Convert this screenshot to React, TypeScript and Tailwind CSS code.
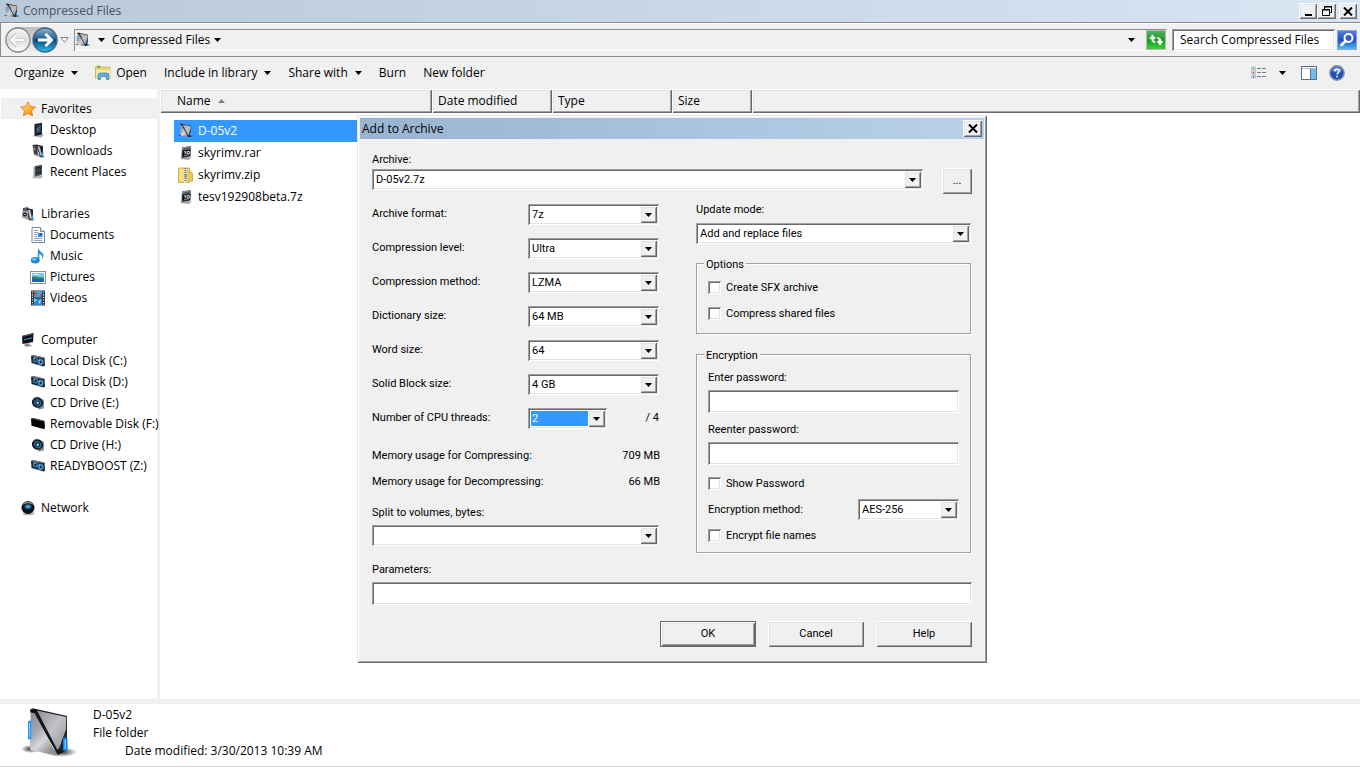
import { useState } from "react";
import type { ReactNode } from "react";

// Classic Windows bevels
const SUNKEN =
  "bg-white shadow-[inset_1px_1px_#a0a0a0,inset_-1px_-1px_#ffffff,inset_2px_2px_#696969,inset_-2px_-2px_#e3e3e3]";
const RAISED =
  "bg-[#f0f0f0] shadow-[inset_1px_1px_#ffffff,inset_-1px_-1px_#696969,inset_2px_2px_#e3e3e3,inset_-2px_-2px_#a0a0a0]";

/* ---------- icons ---------- */

function FolderIcon({ className = "size-4" }: { className?: string }) {
  return (
    <svg viewBox="0 0 56 56" className={`shrink-0 ${className}`} aria-hidden="true">
      <defs>
        <linearGradient id="folderFront" x1="0" y1="0" x2="0.6" y2="1">
          <stop offset="0" stopColor="#85878d" />
          <stop offset="0.45" stopColor="#a9aab1" />
          <stop offset="0.7" stopColor="#d6d7dc" />
          <stop offset="1" stopColor="#8f9096" />
        </linearGradient>
        <linearGradient id="folderBack" x1="0" y1="0" x2="1" y2="1">
          <stop offset="0" stopColor="#8c8e94" />
          <stop offset="0.5" stopColor="#c2c3c9" />
          <stop offset="0.8" stopColor="#a4a5ab" />
          <stop offset="1" stopColor="#5f6166" />
        </linearGradient>
        <radialGradient id="folderShade">
          <stop offset="0" stopColor="#000" stopOpacity="0.85" />
          <stop offset="1" stopColor="#000" stopOpacity="0" />
        </radialGradient>
      </defs>
      <ellipse cx="39" cy="46" rx="16" ry="5" fill="url(#folderShade)" />
      <ellipse cx="9" cy="43" rx="10" ry="4" fill="url(#folderShade)" />
      <path d="M9 3 L14 3 L45 10 L45 44 L36 49 Z" fill="#17181a" />
      <path d="M15 4.500 L44.300 11 L44 26 L38 41 L35.500 44 Z" fill="url(#folderBack)" />
      <path d="M45 21 L40 34 L37 44 L45 44 Z" fill="#26282b" />
      <path d="M8.700 5 L12.500 7 L35.300 49.700 L8 44 Z" fill="url(#folderFront)" />
      <path d="M8 4 Q9 2 12 2.500 Q14.500 3 14 6 L12 7 L8.500 6.500 Z" fill="#0c0d0e" />
      <rect x="6" y="14.500" width="3.200" height="19" rx="1.600" fill="#1996fb" />
      <rect x="7" y="17" width="1.100" height="14" fill="#7fd0ff" />
      <rect x="41" y="31.500" width="4.500" height="13.500" rx="1.600" fill="#0a7ff0" />
      <rect x="42.500" y="33.500" width="1.500" height="9.500" fill="#6fd0ff" />
    </svg>
  );
}

function StarIcon() {
  return (
    <svg viewBox="0 0 16 16" className="size-4 shrink-0" aria-hidden="true">
      <defs>
        <linearGradient id="star" x1="0" y1="0" x2="0.6" y2="1">
          <stop offset="0" stopColor="#fff3a8" />
          <stop offset="0.6" stopColor="#fbb83a" />
          <stop offset="1" stopColor="#f08a1c" />
        </linearGradient>
      </defs>
      <path
        d="M8 .8 L10.200 5.500 L15.400 6.100 L11.500 9.600 L12.600 14.900 L8 12.200 L3.400 14.900 L4.500 9.600 L.6 6.100 L5.800 5.500 Z"
        fill="url(#star)"
        stroke="#dd7f1f"
        strokeWidth="0.9"
        strokeLinejoin="round"
      />
    </svg>
  );
}

function PanelIcon() {
  return (
    <svg viewBox="0 0 16 16" className="size-4 shrink-0" aria-hidden="true">
      <path d="M2 14 L11 15.500 L14 13 L11 12 Z" fill="#a9adb3" />
      <path d="M5 2 L12 .8 L12 12.500 L5 14 Z" fill="#1b222b" />
      <path d="M4 2.500 L5 2 L5 14 L4 13.500 Z" fill="#7f868f" />
      <path d="M6.500 3.500 L11 2.800 L11 10 L6.500 11 Z" fill="#2c435a" />
      <path d="M7.500 9 L10 4.500 M7 6 L9 9.500" stroke="#5d86aa" strokeWidth="0.8" />
    </svg>
  );
}

function RecentIcon() {
  return (
    <svg viewBox="0 0 16 16" className="size-4 shrink-0" aria-hidden="true">
      <path d="M2 14 L11 14.500 L13 12 L6 11 Z" fill="#b3b6ba" />
      <path d="M5 2 L12 .8 L12 11 L5 12.500 Z" fill="#4b5158" />
      <path d="M3.500 3 L5 2 L5 12.500 L3.500 14 Z" fill="#9a9ea4" />
      <path d="M6.500 3.500 L11 2.800 L11 9 L6.500 10 Z" fill="#15191e" />
      <circle cx="8.700" cy="6.300" r="1.500" fill="none" stroke="#7d8893" strokeWidth="0.7" />
    </svg>
  );
}

function DownloadsIcon() {
  return (
    <svg viewBox="0 0 16 16" className="size-4 shrink-0" aria-hidden="true">
      <path d="M3 12 L13 15 L15 13 L6 11 Z" fill="#9fa3a8" />
      <path d="M2.500 2 L7 1.500 L8 12 L4 11 Z" fill="#3b3f45" />
      <path d="M6 1.500 L13 3 L13 13.500 L10 14 Z" fill="#24272b" />
      <path d="M7.500 3 L9.500 3.500 L12 12 L10.500 13 Z" fill="#bfc2c7" />
      <path d="M4 3 L5.500 6 L3.500 8 Z" fill="#9aa0a8" />
      <rect x="11.500" y="9.500" width="1.800" height="3.500" fill="#2a9cf0" />
    </svg>
  );
}

function LibrariesIcon() {
  return (
    <svg viewBox="0 0 16 16" className="size-4 shrink-0" aria-hidden="true">
      <path d="M3 12 L12 15.500 L15 13 L6 11 Z" fill="#a5a8ac" />
      <path d="M3 2 L8 1 L9 12 L3 11 Z" fill="#55595f" />
      <path d="M7 2 L13 3.500 L13 13 L9 14 Z" fill="#2a2d31" />
      <path d="M8 4 L10 4 L12 12 L10 13 Z" fill="#c9ccd0" />
      <rect x="2" y="5" width="6" height="7" fill="#a2a6ab" />
      <circle cx="5" cy="8.500" r="2" fill="#101214" />
      <circle cx="5" cy="8.500" r="0.800" fill="#dfe3e8" />
      <rect x="11.700" y="9.500" width="1.500" height="3" fill="#2a9cf0" />
    </svg>
  );
}

function DocumentsIcon() {
  return (
    <svg viewBox="0 0 16 16" className="size-4 shrink-0" aria-hidden="true">
      <path d="M2 .5 H10.500 L14.500 4.500 V15.500 H2 Z" fill="#fdfdfd" stroke="#7d868f" />
      <path d="M10.500 .5 V4.500 H14.500" fill="#e6eaee" stroke="#7d868f" />
      <path d="M4 3.500 H8.500 M4 5.500 H8.500 M4 7.500 H7 M4 9.500 H7 M4 11.500 H12 M4 13.500 H12" stroke="#8aa6c4" />
      <rect x="8" y="6" width="4.500" height="4" fill="#3a8ad4" />
      <rect x="10" y="6.500" width="2" height="1.500" fill="#13508f" />
    </svg>
  );
}

function MusicIcon() {
  return (
    <svg viewBox="0 0 16 16" className="size-4 shrink-0" aria-hidden="true">
      <path d="M8.300 .5 C9 3.500 14 4.500 13.500 8 C13.300 9.500 12.500 10.500 11.800 11 C12.800 8 11.500 6.500 9.300 5.700 V12 H7.800 V.5 Z" fill="#2f8fd8" />
      <ellipse cx="5.300" cy="12.200" rx="4.400" ry="3.200" fill="#2486d2" />
      <ellipse cx="4.300" cy="11.300" rx="2.200" ry="1.300" fill="#7cc6f3" />
    </svg>
  );
}

function PicturesIcon() {
  return (
    <svg viewBox="0 0 16 16" className="size-4 shrink-0" aria-hidden="true">
      <rect x=".5" y="2.500" width="15" height="12" fill="#fff" stroke="#8a939c" />
      <rect x="2" y="4" width="12" height="9" fill="#7cc4ee" />
      <path d="M2 8 C5 6 8 9 14 8.500 V11 H2 Z" fill="#2d8a63" />
      <path d="M2 9.500 C6 9 9 11 14 10 V13 H2 Z" fill="#1d63b4" />
      <path d="M3 6 C5 4.500 7 6 9 5.500" stroke="#e4f5ff" fill="none" />
    </svg>
  );
}

function VideosIcon() {
  return (
    <svg viewBox="0 0 16 16" className="size-4 shrink-0" aria-hidden="true">
      <rect x="1" y=".5" width="14" height="15" fill="#24303b" />
      <path d="M2.500 1.500 V15 M13.500 1.500 V15" stroke="#d9e2ea" strokeWidth="1.300" strokeDasharray="1.300 1.300" />
      <rect x="4" y="1" width="8" height="6.500" fill="#4ba3e0" />
      <rect x="4" y="8.500" width="8" height="6.500" fill="#2f8ad2" />
      <path d="M4 1 L8 4 L4 6.500 Z M12 3 L9 6 L12 7.500 Z" fill="#b5523a" />
      <path d="M4 8.500 L7 10 L4 12 Z M8 12 L11 9 L10 14 Z" fill="#9ed6ff" />
    </svg>
  );
}

function ComputerIcon() {
  return (
    <svg viewBox="0 0 16 16" className="size-4 shrink-0" aria-hidden="true">
      <path d="M5 12 L9 11 L10 13 L13 13.500 L7 15 L4 13.500 Z" fill="#8b8f94" />
      <path d="M2 4 L13.500 1 L13 10 L2.500 12 Z" fill="#0b0d10" />
      <path d="M2 4 L13.500 1 L13.400 2.500 L2.100 5.300 Z" fill="#4c5258" />
      <path d="M4 8 C7 6 9 7.500 12 5.500" stroke="#2d9be0" strokeWidth="1.100" fill="none" />
    </svg>
  );
}

function DiskIcon() {
  return (
    <svg viewBox="0 0 16 16" className="size-4 shrink-0" aria-hidden="true">
      <path d="M1 3 L3 2 L14.500 4.500 L15 12.500 L13.500 13.500 L1.500 10 Z" fill="#23292f" />
      <path d="M1 3 L3 2 L14.500 4.500 L13 5.300 Z" fill="#7f868d" />
      <circle cx="5.500" cy="6.700" r="2.600" fill="#2f77ad" />
      <circle cx="5.500" cy="6.700" r="1" fill="#0a1824" />
      <circle cx="10.700" cy="9" r="2.900" fill="#3f93cf" />
      <circle cx="10.700" cy="9" r="1.100" fill="#0a1824" />
      <path d="M9 7.500 L10 6.800 M4 5.500 L5 4.900" stroke="#b8e2fb" />
    </svg>
  );
}

function DiscIcon() {
  return (
    <svg viewBox="0 0 16 16" className="size-4 shrink-0" aria-hidden="true">
      <path d="M8 2 L14 5 L14 13.500 L8 14.500 Z" fill="#8b9097" />
      <ellipse cx="7.500" cy="7.500" rx="5.700" ry="5.200" transform="rotate(30 7.500 7.500)" fill="#12181e" />
      <ellipse cx="7.700" cy="7.700" rx="3.900" ry="3.400" transform="rotate(30 7.700 7.700)" fill="#2f6d99" />
      <ellipse cx="7.700" cy="7.700" rx="2.600" ry="2.200" fill="#0f2233" />
      <circle cx="7.700" cy="7.700" r="1.300" fill="#8fd0f5" />
      <path d="M3 4.500 A6 6 0 0 1 8 2" stroke="#6d7780" fill="none" />
    </svg>
  );
}

function RemovableIcon() {
  return (
    <svg viewBox="0 0 16 16" className="size-4 shrink-0" aria-hidden="true">
      <path d="M1 2.800 L3 2 L14.500 5 L15 12.500 L13.500 13 L1.500 9.800 Z" fill="#050607" />
      <path d="M1 2.800 L3 2 L14.500 5 L13.500 5.500 Z" fill="#4b4f54" />
    </svg>
  );
}

function NetworkIcon() {
  return (
    <svg viewBox="0 0 16 16" className="size-4 shrink-0" aria-hidden="true">
      <ellipse cx="8.500" cy="13.500" rx="6" ry="1.800" fill="#b3b6ba" />
      <circle cx="8" cy="7.500" r="6.500" fill="#0e1317" />
      <path d="M2.500 5 A6 6 0 0 1 13.500 5 Q8 1.500 2.500 5 Z" fill="#838c95" />
      <ellipse cx="8" cy="6.800" rx="3.800" ry="2.800" fill="#1f4a6e" />
      <path d="M5.500 6 Q8 4 10.500 6 L9.500 8 H6.500 Z" fill="#4f9fd2" />
    </svg>
  );
}

function ArchiveIcon() {
  return (
    <svg viewBox="0 0 16 16" className="size-4 shrink-0" aria-hidden="true">
      <path d="M2 14 L11 15 L13.500 12.500 L5 11.500 Z" fill="#a4a8ad" />
      <path d="M4 2.500 L13 1 L12.500 11.500 L3.500 13 Z" fill="#30353b" />
      <path d="M4 2.500 L13 1 L13 4 L4 5.300 Z" fill="#80868e" />
      <path d="M5.500 4.200 L12 3.100" stroke="#33383d" strokeWidth="0.700" />
      <rect x="5" y="5.500" width="7" height="5.500" fill="#0d1013" />
      <path d="M5.800 6.800 H8 L7 9 M9.200 9 V6.500 H11.300 V9 Z" fill="none" stroke="#e8ebee" strokeWidth="0.900" />
      <path d="M6 10.400 L11 9.900" stroke="#c7ccd1" strokeWidth="0.700" />
    </svg>
  );
}

function ZipIcon() {
  return (
    <svg viewBox="0 0 16 16" className="size-4 shrink-0" aria-hidden="true">
      <path d="M.5 1 H7 V15.500 H.5 Z" fill="#f6df83" stroke="#c79e35" strokeWidth="0.800" />
      <path d="M7 1 H11.500 V5 H13.500 L14.500 6.500 V14 H11.500 V15.500 H7 Z" fill="#ecc95f" stroke="#c79e35" strokeWidth="0.800" />
      <rect x="6" y="1" width="3" height="14.500" fill="#f4f4ee" />
      <path d="M7.500 1 V15" stroke="#666" strokeWidth="2.200" strokeDasharray="1 1" />
      <rect x="6.300" y="7" width="2.500" height="3.500" fill="#8f9499" />
    </svg>
  );
}

function OpenFolderIcon() {
  return (
    <svg viewBox="0 0 16 16" className="size-4 shrink-0" aria-hidden="true">
      <path d="M.5 2 L1.500 1 H6 L7 2 H15 V13.500 H.5 Z" fill="#ecd479" stroke="#c6a74a" strokeWidth="0.700" />
      <rect x="2" y="1.500" width="3" height="1.500" fill="#54b04b" />
      <path d="M1 5 H15.500 V14 H1.500 Z" fill="#f6e9a4" />
      <path d="M3 14.500 V10.500 Q3 8 5.500 8 H11.500 Q14 8 14 10.500 V14.500 H11.500 V11.500 H5.500 V14.500 Z" fill="#5db1e6" stroke="#3384bd" strokeWidth="0.700" />
    </svg>
  );
}

function Caret({ className = "" }: { className?: string }) {
  return (
    <svg viewBox="0 0 7 4" className={`h-1 w-[7px] shrink-0 ${className}`} aria-hidden="true">
      <path d="M0 0 H7 L3.500 4 Z" fill="#000" />
    </svg>
  );
}

function CloseGlyph() {
  return (
    <svg viewBox="0 0 10 9" className="h-[9px] w-[10px]" aria-hidden="true">
      <path d="M1 .5 L9 8.500 M9 .5 L1 8.500" stroke="#000" strokeWidth="2" />
    </svg>
  );
}

/* ---------- explorer window ---------- */

function TitleBar() {
  return (
    <header className="flex h-[22px] items-center bg-linear-to-r from-[#b9c9d9] to-[#d8e5f3] pr-[3px] pl-1">
      <FolderIcon />
      <h1 className="grow pl-[3px] text-xs text-[#47535f]">Compressed Files</h1>
      <button aria-label="Minimize" className={`flex h-4 w-[18px] items-end justify-center pb-[3px] ${RAISED}`}>
        <span className="h-[2px] w-[7px] bg-black" />
      </button>
      <button aria-label="Restore" className={`mr-[3px] flex h-4 w-[19px] items-center justify-center ${RAISED}`}>
        <svg viewBox="0 0 10 10" className="size-[10px]" aria-hidden="true">
          <path d="M2.500 3 V.5 H9.500 V6.500 H8 M2 1 H10 M.5 3.500 H7.500 V9.500 H.5 Z M0 4 H8" fill="none" stroke="#000" />
        </svg>
      </button>
      <button aria-label="Close" className={`flex h-4 w-[18px] items-center justify-center ${RAISED}`}>
        <CloseGlyph />
      </button>
    </header>
  );
}

function NavButtons() {
  return (
    <div className="flex h-7 w-[68px] items-center">
      <div className="flex rounded-full bg-linear-to-b from-[#bdbdbd] to-[#f0f0f0]">
        <button aria-label="Back" className="mr-px size-[26px]">
          <svg viewBox="0 0 26 26" className="size-[26px]" aria-hidden="true">
            <defs>
              <linearGradient id="back" x1="0" y1="0" x2="0" y2="1">
                <stop offset="0" stopColor="#f7f7f7" />
                <stop offset="0.5" stopColor="#dcdcdd" />
                <stop offset="1" stopColor="#ffffff" />
              </linearGradient>
            </defs>
            <circle cx="13" cy="13" r="12" fill="url(#back)" stroke="#85888c" strokeWidth="1.300" />
            <path d="M6.500 13 H20 M12 7 L6 13 L12 19" fill="none" stroke="#c3c5c8" strokeWidth="4" />
            <path d="M6.500 13 H19.500 M12 7.500 L6.500 13 L12 18.500" fill="none" stroke="#f7f7f7" strokeWidth="2.400" />
          </svg>
        </button>
        <button aria-label="Forward" className="size-[26px]">
          <svg viewBox="0 0 26 26" className="size-[26px]" aria-hidden="true">
            <defs>
              <linearGradient id="fwd" x1="0" y1="0" x2="0" y2="1">
                <stop offset="0" stopColor="#8fb4cf" />
                <stop offset="0.45" stopColor="#1f5f92" />
                <stop offset="0.5" stopColor="#0a467a" />
                <stop offset="1" stopColor="#29c3f2" />
              </linearGradient>
            </defs>
            <circle cx="13" cy="13" r="12" fill="url(#fwd)" stroke="#44637d" strokeWidth="1.300" />
            <path d="M6 13 H19 M13.500 7 L19.500 13 L13.500 19" fill="none" stroke="#fff" strokeWidth="3" />
          </svg>
        </button>
      </div>
      <button aria-label="Recent pages" className="pl-[2px]">
        <svg viewBox="0 0 9 6" className="h-[6px] w-[9px]" aria-hidden="true">
          <path d="M.7 .5 H8.300 L4.500 5.200 Z" fill="#fff" stroke="#777" strokeWidth="0.900" />
        </svg>
      </button>
    </div>
  );
}

function AddressBar() {
  return (
    <div className="flex h-[35px] items-center border-y border-l border-[#8c8c8c] bg-[#f0f0f0] pl-1 shadow-[inset_0_1px_#ffffff,0_1px_#ffffff]">
      <NavButtons />
      <nav
        aria-label="Address"
        className="ml-px flex h-[22px] grow items-center border-t border-l border-[#8c8c8c] shadow-[inset_0_-1px_#ffffff]"
      >
        <FolderIcon />
        <button aria-label="Root" className="px-[7px]">
          <Caret />
        </button>
        <a href="#compressed" className="text-xs">Compressed Files</a>
        <button aria-label="Subfolders" className="px-1">
          <Caret />
        </button>
        <button aria-label="Previous locations" className="mr-[11px] ml-auto">
          <Caret />
        </button>
        <button aria-label="Refresh" className="size-[20px] border border-[#b8b8b8] bg-linear-to-b from-[#4fb35a] via-[#159a22] to-[#39d338]">
          <svg viewBox="0 0 18 18" className="size-[18px]" aria-hidden="true">
            <path d="M2 8 L5.500 3.500 L9 8 H6.800 Q6.800 10.500 9 12 Q4.500 12 4.200 8 Z" fill="#fff" />
            <path d="M16.500 10 L13 14.500 L9.500 10 H11.700 Q11.700 7.500 9 6 Q14 6 14.300 10 Z" fill="#fff" />
          </svg>
        </button>
      </nav>
      <input
        type="text"
        aria-label="Search"
        defaultValue="Search Compressed Files"
        className={`ml-[6px] h-[22px] w-[163px] pl-2 text-xs outline-none ${SUNKEN}`}
      />
      <button aria-label="Go" className="mr-[3px] ml-[2px] size-[20px] border border-[#8fa6cf] bg-linear-to-b from-[#5a7fd6] via-[#1d4fc4] to-[#54b8f2]">
        <svg viewBox="0 0 18 18" className="size-[18px]" aria-hidden="true">
          <circle cx="10.500" cy="7" r="4" fill="#2a5fc8" stroke="#fff" strokeWidth="2" />
          <path d="M7.500 10 L3.500 14" stroke="#fff" strokeWidth="2.600" strokeLinecap="round" />
        </svg>
      </button>
    </div>
  );
}

function ToolButton({ children, caret }: { children: ReactNode; caret?: boolean }) {
  return (
    <button className="flex items-center whitespace-nowrap">
      {children}
      {caret && <Caret className="ml-[7px]" />}
    </button>
  );
}

function Toolbar() {
  return (
    <div className="flex h-8 items-center gap-[17px] bg-[#f0f0f0] pr-[15px] pl-[14px] text-xs">
      <ToolButton caret>Organize</ToolButton>
      <ToolButton>
        <OpenFolderIcon />
        <span className="pl-[5px]">Open</span>
      </ToolButton>
      <ToolButton caret>Include in library</ToolButton>
      <ToolButton caret>Share with</ToolButton>
      <ToolButton>Burn</ToolButton>
      <ToolButton>New folder</ToolButton>
      <div className="ml-auto flex items-center gap-3">
        <button aria-label="View">
          <svg viewBox="0 0 16 14" className="h-[14px] w-4" aria-hidden="true">
            <path d="M6 2.500 H10 M11 2.500 H15 M6 6.500 H10 M11 6.500 H15 M6 10.500 H10 M11 10.500 H15" stroke="#6d7f92" />
            <path d="M.5 1 H4.500 V4 H.5 Z M.5 5 H4.500 V8 H.5 Z M.5 9 H4.500 V12 H.5 Z" fill="#fff" stroke="#a6b3c2" strokeWidth="0.800" />
            <rect x="1.700" y="1.800" width="1.600" height="1.600" fill="#3f9a3a" />
            <rect x="1.700" y="5.800" width="1.600" height="1.600" fill="#d62f2f" />
            <rect x="1.700" y="9.800" width="1.600" height="1.600" fill="#2f63c9" />
          </svg>
        </button>
        <button aria-label="More view options" className="pr-[3px]">
          <Caret />
        </button>
        <button aria-label="Preview pane">
          <svg viewBox="0 0 16 14" className="h-[14px] w-4" aria-hidden="true">
            <rect x=".5" y=".5" width="15" height="13" fill="#fff" stroke="#5a7289" />
            <path d="M1 2.500 H15" stroke="#a9bccd" />
            <rect x="10" y="3" width="5" height="10" fill="#6fbfe6" />
            <path d="M9.500 3 V13" stroke="#5a7289" />
          </svg>
        </button>
        <button aria-label="Help">
          <svg viewBox="0 0 16 16" className="size-4" aria-hidden="true">
            <circle cx="8" cy="8" r="7.200" fill="#2450b5" stroke="#8a93a3" strokeWidth="1.400" />
            <path d="M3 6 A5.200 5.200 0 0 1 13 6 Q8 8 3 6 Z" fill="#6f93e0" />
            <path d="M5.800 6.300 Q5.800 4.200 8 4.200 Q10.300 4.200 10.300 6 Q10.300 7.200 9 7.900 Q8.100 8.400 8.100 9.600" fill="none" stroke="#fff" strokeWidth="1.500" />
            <rect x="7.300" y="10.800" width="1.600" height="1.600" fill="#fff" />
          </svg>
        </button>
      </div>
    </div>
  );
}

const navGroups = [
  {
    title: "Favorites",
    icon: <StarIcon />,
    active: true,
    items: [
      { label: "Desktop", icon: <PanelIcon /> },
      { label: "Downloads", icon: <DownloadsIcon /> },
      { label: "Recent Places", icon: <RecentIcon /> },
    ],
  },
  {
    title: "Libraries",
    icon: <LibrariesIcon />,
    items: [
      { label: "Documents", icon: <DocumentsIcon /> },
      { label: "Music", icon: <MusicIcon /> },
      { label: "Pictures", icon: <PicturesIcon /> },
      { label: "Videos", icon: <VideosIcon /> },
    ],
  },
  {
    title: "Computer",
    icon: <ComputerIcon />,
    items: [
      { label: "Local Disk (C:)", icon: <DiskIcon /> },
      { label: "Local Disk (D:)", icon: <DiskIcon /> },
      { label: "CD Drive (E:)", icon: <DiscIcon /> },
      { label: "Removable Disk (F:)", icon: <RemovableIcon /> },
      { label: "CD Drive (H:)", icon: <DiscIcon /> },
      { label: "READYBOOST (Z:)", icon: <DiskIcon /> },
    ],
  },
  { title: "Network", icon: <NetworkIcon />, items: [] },
];

function Sidebar() {
  return (
    <nav aria-label="Folders" className="flex w-[160px] shrink-0 flex-col gap-[21px] border-r-3 border-[#f0f0f0] pt-[9px] text-xs">
      {navGroups.map((group) => (
        <div key={group.title}>
          <a
            href="#group"
            className={`ml-px flex h-[21px] items-center gap-[5px] pl-[19px] ${group.active ? "bg-[#f0f0f0]" : ""}`}
          >
            {group.icon}
            {group.title}
          </a>
          {group.items.map((item) => (
            <a key={item.label} href="#item" className="flex h-[21px] items-center gap-1 pl-[30px] whitespace-nowrap">
              {item.icon}
              {item.label}
            </a>
          ))}
        </div>
      ))}
    </nav>
  );
}

const files = [
  { name: "D-05v2", icon: <FolderIcon />, selected: true },
  { name: "skyrimv.rar", icon: <ArchiveIcon /> },
  { name: "skyrimv.zip", icon: <ZipIcon /> },
  { name: "tesv192908beta.7z", icon: <ArchiveIcon /> },
];

const TH = `h-6 pl-[6px] text-left font-normal ${RAISED}`;

function FileList() {
  return (
    <main className="grow text-xs">
      <table className="w-full table-fixed border-collapse">
        <thead>
          <tr>
            <th className={`w-[272px] ${TH}`}>
              <span className="flex items-center gap-[7px] pl-[11px]">
                Name
                <svg viewBox="0 0 7 4" className="h-1 w-[7px]" aria-hidden="true">
                  <path d="M0 4 H7 L3.500 0 Z" fill="#7a7a7a" />
                </svg>
              </span>
            </th>
            <th className={`w-[120px] ${TH}`}>Date modified</th>
            <th className={`w-[120px] ${TH}`}>Type</th>
            <th className={`w-[80px] ${TH}`}>Size</th>
            <td className={TH} />
          </tr>
        </thead>
        <tbody className="before:block before:h-[7px]">
          {files.map((file) => (
            <tr key={file.name}>
              <td className="h-[22px] p-0 pl-[14px]">
                <span
                  className={`flex h-[22px] items-center gap-[4px] pl-1 ${file.selected ? "bg-[#3399ff] text-white" : ""}`}
                >
                  {file.icon}
                  {file.name}
                </span>
              </td>
              <td colSpan={4} />
            </tr>
          ))}
        </tbody>
      </table>
    </main>
  );
}

function DetailsPane() {
  return (
    <footer className="flex h-[69px] items-start border-t-[5px] border-[#f0f0f0] pl-[22px] text-xs shadow-[inset_0_-1px_#ffffff,inset_0_-2px_#dcdcdc]">
      <FolderIcon className="mt-[2px] size-14" />
      <div className="pt-[2px] pl-[15px] leading-[18px]">
        <p>D-05v2</p>
        <p>File folder</p>
        <p className="flex gap-[3px] pl-8">
          <span>Date modified:</span>
          <span>3/30/2013 10:39 AM</span>
        </p>
      </div>
    </footer>
  );
}

/* ---------- Add to Archive dialog ---------- */

interface ComboProps {
  id: string;
  value: string;
  className?: string;
  label?: string;
  focused?: boolean;
}

function Combo({ id, value, className = "w-[131px]", focused }: ComboProps) {
  return (
    <span className={`relative block h-[21px] p-[2px] ${SUNKEN} ${className}`}>
      <select
        id={id}
        className={`block h-[17px] w-full appearance-none outline-none ${
          focused
            ? "border border-r-[17px] border-white bg-[#3399ff] pl-px leading-[15px] text-white"
            : "bg-white pl-[2px] leading-[17px]"
        }`}
      >
        <option>{value}</option>
      </select>
      <span className={`pointer-events-none absolute top-[2px] right-[2px] flex h-[17px] w-[17px] items-center justify-center ${RAISED}`}>
        <Caret />
      </span>
    </span>
  );
}

function ComboRow({ id, label, value }: ComboProps) {
  return (
    <div className="flex h-[22px] items-end justify-between">
      <label htmlFor={id} className="leading-[22px]">{label}</label>
      <Combo id={id} value={value} />
    </div>
  );
}

function Check({ label }: { label: string }) {
  const [checked, setChecked] = useState(false);
  return (
    <label className="flex h-[13px] items-center gap-[5px]">
      <input
        type="checkbox"
        checked={checked}
        onChange={() => setChecked(!checked)}
        className={`size-[13px] appearance-none checked:bg-[#3399ff] ${SUNKEN}`}
      />
      {label}
    </label>
  );
}

function Group({ title, className, children }: { title: string; className: string; children: ReactNode }) {
  return (
    <fieldset className={`border border-[#a0a0a0] px-[11px] shadow-[1px_1px_#ffffff,inset_1px_1px_#ffffff] ${className}`}>
      <legend className="-ml-1 h-[18px] bg-[#f0f0f0] px-[2px] leading-[22px]">{title}</legend>
      {children}
    </fieldset>
  );
}

const settings = [
  { id: "format", label: "Archive format:", value: "7z" },
  { id: "level", label: "Compression level:", value: "Ultra" },
  { id: "method", label: "Compression method:", value: "LZMA" },
  { id: "dictionary", label: "Dictionary size:", value: "64 MB" },
  { id: "word", label: "Word size:", value: "64" },
  { id: "block", label: "Solid Block size:", value: "4 GB" },
];

function ArchiveDialog() {
  return (
    <section
      role="dialog"
      aria-label="Add to Archive"
      className="absolute top-[115px] left-[357px] w-[630px] bg-[#f0f0f0] p-[3px] font-['Roboto','Liberation_Sans',sans-serif] text-[11px] leading-[16px] shadow-[inset_1px_1px_#e3e3e3,inset_-1px_-1px_#696969,inset_2px_2px_#ffffff,inset_-2px_-2px_#a0a0a0]"
    >
      <div className="flex h-[21px] items-center bg-linear-to-r from-[#99b4d1] to-[#b9d1ea] pr-[2px] pl-[2px] font-['Open_Sans',sans-serif] text-xs">
        <h2 className="grow">Add to Archive</h2>
        <button aria-label="Close dialog" className={`flex h-[17px] w-[19px] items-center justify-center ${RAISED}`}>
          <CloseGlyph />
        </button>
      </div>

      <form className="pt-[13px] pr-3 pb-[13px] pl-3" onSubmit={(e) => e.preventDefault()}>
        <div className="flex items-end justify-between">
          <div>
            <label htmlFor="archive" className="block h-[17px]">Archive:</label>
            <Combo id="archive" value="D-05v2.7z" className="w-[551px]" />
          </div>
          <button className={`-mb-1 h-[26px] w-[30px] ${RAISED}`}>...</button>
        </div>

        <div className="flex justify-between pt-[13px]">
          <div className="w-[289px]">
            <div className="flex w-[287px] flex-col gap-3">
              {settings.map((s) => (
                <ComboRow key={s.id} {...s} />
              ))}
              <div className="flex h-[22px] items-end">
                <label htmlFor="threads" className="w-[156px] leading-[22px]">Number of CPU threads:</label>
                <Combo id="threads" value="2" className="w-[79px]" focused />
                <span className="ml-auto leading-[22px]">/ 4</span>
              </div>
            </div>
            <dl className="flex w-[288px] flex-col gap-[10px] pt-[19px]">
              <div className="flex justify-between">
                <dt>Memory usage for Compressing:</dt>
                <dd>709 MB</dd>
              </div>
              <div className="flex justify-between">
                <dt>Memory usage for Decompressing:</dt>
                <dd>66 MB</dd>
              </div>
            </dl>
            <label htmlFor="split" className="mt-[15px] block h-5">Split to volumes, bytes:</label>
            <Combo id="split" value="" className="w-[287px]" />
          </div>

          <div className="w-[276px]">
            <label htmlFor="update" className="-mt-px block h-[21px]">Update mode:</label>
            <Combo id="update" value="Add and replace files" className="w-[275px]" />

            <Group title="Options" className="mt-[10px] h-[80px] w-[275px]">
              <div className="flex flex-col gap-[13px] pt-[9px]">
                <Check label="Create SFX archive" />
                <Check label="Compress shared files" />
              </div>
            </Group>

            <Group title="Encryption" className="mt-[11px] h-[208px] w-[275px]">
              <div className="pt-[7px]">
                <label htmlFor="password" className="block h-5">Enter password:</label>
                <input id="password" type="password" className={`block h-[23px] w-full px-1 outline-none ${SUNKEN}`} />
                <label htmlFor="reenter" className="block h-[29px] pt-[9px]">Reenter password:</label>
                <input id="reenter" type="password" className={`block h-[23px] w-full px-1 outline-none ${SUNKEN}`} />
              </div>
              <div className="flex flex-col gap-[9px] pt-3">
                <Check label="Show Password" />
                <div className="flex h-[21px] items-center justify-between">
                  <label htmlFor="encryption">Encryption method:</label>
                  <Combo id="encryption" value="AES-256" className="w-[101px]" />
                </div>
                <Check label="Encrypt file names" />
              </div>
            </Group>
          </div>
        </div>

        <label htmlFor="parameters" className="mt-[9px] block h-5">Parameters:</label>
        <input id="parameters" type="text" className={`block h-[23px] w-full px-1 outline-none ${SUNKEN}`} />

        <div className="flex justify-end gap-3 pt-4">
          <button className="h-[26px] w-24 bg-[#f0f0f0] shadow-[inset_0_0_0_1px_#696969,inset_2px_2px_#ffffff,inset_-2px_-2px_#696969,inset_3px_3px_#e3e3e3,inset_-3px_-3px_#a0a0a0]">
            OK
          </button>
          <button className={`h-[26px] w-24 ${RAISED}`}>Cancel</button>
          <button className={`h-[26px] w-24 ${RAISED}`}>Help</button>
        </div>
      </form>
    </section>
  );
}

export default function App() {
  return (
    <div className="relative flex min-h-screen flex-col bg-white font-['Open_Sans',sans-serif] text-black">
      <TitleBar />
      <AddressBar />
      <Toolbar />
      <div className="flex grow">
        <Sidebar />
        <FileList />
      </div>
      <DetailsPane />
      <ArchiveDialog />
    </div>
  );
}
